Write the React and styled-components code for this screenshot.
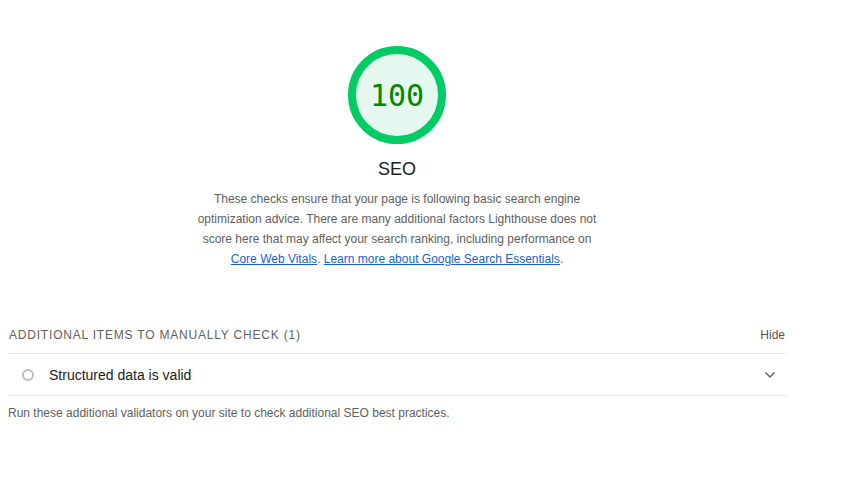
import React from "react";
import styled, { createGlobalStyle } from "styled-components";

const Global = createGlobalStyle`
  html, body { margin: 0; padding: 0; background: #fff; }
  body { font-family: "Liberation Sans", Arial, sans-serif; color: #212121; }
`;

const Page = styled.div`
  width: 778px;
  margin-left: 8px;
  padding-top: 46px;
`;

const Header = styled.div`
  display: flex;
  flex-direction: column;
  align-items: center;
`;

const Gauge = styled.div`
  position: relative;
  width: 98px;
  height: 98px;
  svg { display: block; }
`;

const GaugeValue = styled.div`
  position: absolute;
  inset: 0;
  display: flex;
  align-items: center;
  justify-content: center;
  font-family: "DejaVu Sans Mono", "Liberation Mono", monospace;
  font-size: 30px;
  color: #008800;
`;

const Title = styled.div`
  margin-top: 13px;
  font-size: 18px;
  line-height: 24px;
  color: #212121;
`;

const Description = styled.p`
  margin: 8px 0 0;
  max-width: 400px;
  text-align: center;
  font-size: 12px;
  line-height: 20px;
  color: #616161;
`;

const Link = styled.a`
  color: #1a5fd4;
  text-decoration: underline;
`;

const Group = styled.section`
  margin-top: 56px;
`;

const GroupHeader = styled.div`
  display: flex;
  justify-content: space-between;
  align-items: center;
  height: 20px;
  padding-bottom: 8px;
  border-bottom: 1px solid #e8e8e8;
`;

const GroupTitle = styled.div`
  font-size: 12px;
  letter-spacing: 0.8px;
  text-transform: uppercase;
  color: #616161;
  padding-left: 1px;
`;

const HideButton = styled.span`
  font-size: 12px;
  color: #555;
  padding-right: 1px;
`;

const AuditRow = styled.div`
  display: flex;
  align-items: center;
  height: 41px;
  border-bottom: 1px solid #e8e8e8;
  padding: 0 10px 0 14px;
`;

const Indicator = styled.span`
  box-sizing: border-box;
  width: 12px;
  height: 12px;
  border: 2px solid #bdbdbd;
  border-radius: 50%;
  flex: none;
`;

const AuditTitle = styled.span`
  margin-left: 15px;
  font-size: 14px;
  color: #212121;
  flex: 1;
`;

const Chevron = styled.svg`
  display: block;
  flex: none;
`;

const GroupDescription = styled.p`
  margin: 7px 0 0;
  font-size: 12px;
  line-height: 20px;
  color: #616161;
`;

export default function App() {
  return (
    <>
      <Global />
      <Page>
        <Header>
          <Gauge>
            <svg width="98" height="98" viewBox="0 0 98 98">
              <circle cx="49" cy="49" r="45" fill="#e5f8ef" stroke="#00cc66" strokeWidth="8" />
            </svg>
            <GaugeValue>100</GaugeValue>
          </Gauge>
          <Title>SEO</Title>
          <Description>
            These checks ensure that your page is following basic search engine optimization advice.
            There are many additional factors Lighthouse does not score here that may affect your
            search ranking, including performance on <Link href="#">Core Web Vitals</Link>.{" "}
            <Link href="#">Learn more about Google Search Essentials</Link>.
          </Description>
        </Header>
        <Group>
          <GroupHeader>
            <GroupTitle>Additional items to manually check (1)</GroupTitle>
            <HideButton>Hide</HideButton>
          </GroupHeader>
          <AuditRow>
            <Indicator />
            <AuditTitle>Structured data is valid</AuditTitle>
            <Chevron width="12" height="8" viewBox="0 0 12 8">
              <path d="M1.5 1.5l4.5 4.5 4.5-4.5" fill="none" stroke="#5f6368" strokeWidth="1.5" />
            </Chevron>
          </AuditRow>
          <GroupDescription>
            Run these additional validators on your site to check additional SEO best practices.
          </GroupDescription>
        </Group>
      </Page>
    </>
  );
}
